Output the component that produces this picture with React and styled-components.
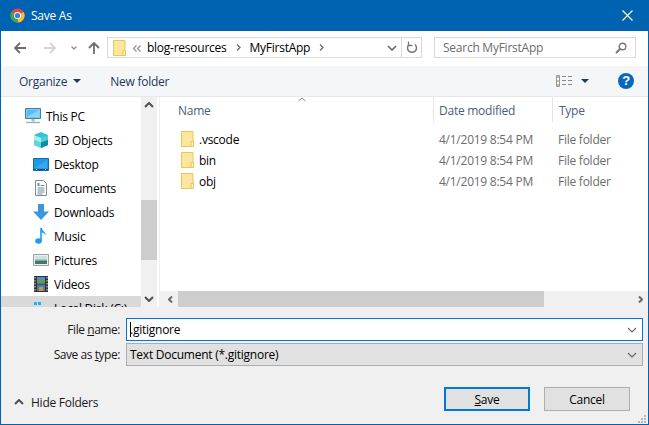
import styled, { createGlobalStyle } from "styled-components";

const GlobalStyle = createGlobalStyle`
  html, body {
    margin: 0;
    padding: 0;
    background: #fff;
  }
  * {
    box-sizing: border-box;
  }
`;

const Dialog = styled.div`
  position: relative;
  width: 649px;
  height: 425px;
  display: flex;
  flex-direction: column;
  overflow: hidden;
  background: #fff;
  border: 1px solid #0063b1;
  border-top: 0;
  font-family: "Open Sans", "Noto Sans", sans-serif;
  font-size: 12px;
  letter-spacing: -0.25px;
  color: #000;
`;

const TitleBar = styled.div`
  height: 31px;
  flex: none;
  margin: 0 -1px;
  padding: 0 16px 0 10px;
  display: flex;
  align-items: center;
  gap: 6px;
  background: #0063b1;
  color: #fff;
`;

const Title = styled.span`
  flex: 1;
`;

const NavBar = styled.div`
  height: 35px;
  flex: none;
  padding: 6px 13px 8px 13px;
  display: flex;
  align-items: center;
`;

const NavIcon = styled.svg`
  flex: none;
  margin-right: ${(p) => p.$gap}px;
`;

const AddressBox = styled.div`
  width: 315px;
  height: 21px;
  flex: none;
  padding-left: 5px;
  display: flex;
  align-items: center;
  border: 1px solid #d9d9d9;
`;

const Crumb = styled.span`
  margin-left: ${(p) => p.$left}px;
  margin-right: ${(p) => p.$right}px;
`;

const AddressEnd = styled.div`
  margin-left: auto;
  display: flex;
  align-items: center;
  height: 100%;
`;

const RefreshCell = styled.div`
  width: 20px;
  height: 100%;
  margin-left: 4px;
  display: flex;
  align-items: center;
  justify-content: center;
  border-left: 1px solid #d9d9d9;
`;

const SearchBox = styled.div`
  width: 202px;
  height: 21px;
  margin-left: 12px;
  flex: none;
  padding: 0 8px;
  display: flex;
  align-items: center;
  justify-content: space-between;
  border: 1px solid #d9d9d9;
  color: #6d6d6d;
`;

const CommandBar = styled.div`
  height: 31px;
  flex: none;
  padding: 0 14px 0 18px;
  display: flex;
  align-items: center;
  background: #f5f6f7;
  border-bottom: 1px solid #e8e8e8;
  color: #1e395b;
`;

const Command = styled.span`
  display: flex;
  align-items: center;
  gap: 6px;
  margin-right: 29px;
`;

const Spacer = styled.div`
  flex: 1;
`;

const ViewsButton = styled.div`
  display: flex;
  align-items: center;
  gap: 9px;
  margin-right: 29px;
`;

const HelpIcon = styled.span`
  width: 16px;
  height: 16px;
  border-radius: 50%;
  background: #0a67bd;
  color: #fff;
  font-family: "Liberation Sans", sans-serif;
  font-weight: bold;
  font-size: 13px;
  line-height: 16px;
  text-align: center;
`;

const Browser = styled.div`
  height: 210px;
  flex: none;
  display: flex;
`;

const Tree = styled.div`
  width: 140px;
  flex: none;
  padding-top: 7px;
  overflow: hidden;
`;

const TreeRow = styled.div`
  height: 24px;
  flex: none;
  padding-left: ${(p) => (p.$root ? 24 : 31)}px;
  display: flex;
  align-items: center;
  gap: 5px;
  background: ${(p) => (p.$selected ? "#d9d9d9" : "transparent")};
  white-space: nowrap;
`;

const TreeIconBox = styled.span`
  width: ${(p) => (p.$root ? 16 : 17)}px;
  height: 16px;
  flex: none;
  display: flex;
  align-items: center;
  justify-content: center;
`;

const VerticalScroll = styled.div`
  width: 16px;
  flex: none;
  display: flex;
  flex-direction: column;
  background: #f0f0f0;
`;

const ScrollArrow = styled.div`
  width: 16px;
  height: 16px;
  flex: none;
  display: flex;
  align-items: center;
  justify-content: center;
`;

const VerticalTrack = styled.div`
  flex: 1;
  padding-top: 87px;
`;

const VerticalThumb = styled.div`
  height: 60px;
  background: #cdcdcd;
`;

const FilePane = styled.div`
  flex: 1;
  min-width: 0;
  margin-left: 2px;
  display: flex;
  flex-direction: column;
  border-left: 1px solid #f0f0f0;
`;

const FileArea = styled.div`
  flex: 1;
  min-height: 0;
`;

const HeaderRow = styled.div`
  position: relative;
  height: 31px;
  display: grid;
  grid-template-columns: 273px 119px 1fr;
  color: #4c607a;
`;

const HeaderCell = styled.div`
  height: 25px;
  padding: 2px 0 0 ${(p) => p.$pad}px;
  display: flex;
  align-items: center;
  border-left: ${(p) => (p.$line ? "1px solid #e5e5e5" : "0")};
`;

const SortMark = styled.svg`
  position: absolute;
  left: 138px;
  top: 0;
`;

const FileRow = styled.div`
  height: 21px;
  display: grid;
  grid-template-columns: 273px 119px 1fr;
  align-items: center;
`;

const NameCell = styled.div`
  padding-left: 21px;
  display: flex;
  align-items: center;
  gap: 5px;
`;

const FileName = styled.span`
  margin-top: 2px;
`;

const MetaCell = styled.div`
  padding: 2px 0 0 6px;
  color: #6d6d6d;
  white-space: nowrap;
`;

const HorizontalScroll = styled.div`
  height: 16px;
  flex: none;
  padding-left: 2px;
  display: flex;
  background: #f0f0f0;
`;

const HorizontalTrack = styled.div`
  flex: 1;
`;

const HorizontalThumb = styled.div`
  width: 366px;
  height: 100%;
  background: #cdcdcd;
`;

const Footer = styled.div`
  flex: 1;
  min-height: 0;
  padding: 11px 5px 0 0;
  display: flex;
  flex-direction: column;
  background: #f0f0f0;
`;

const FieldRow = styled.div`
  height: 23px;
  margin-bottom: 2px;
  display: flex;
  align-items: center;
  gap: 6px;
`;

const FieldLabel = styled.label`
  width: 119px;
  flex: none;
  text-align: right;
  letter-spacing: -0.45px;
  color: #1a1a1a;
`;

const Underlined = styled.span`
  text-decoration: underline;
`;

const FieldBox = styled.div`
  flex: 1;
  height: 23px;
  padding: 0 5px 0 3px;
  display: flex;
  align-items: center;
  justify-content: space-between;
  background: ${(p) => (p.$active ? "#fff" : "#e1e1e1")};
  border: 1px solid ${(p) => (p.$active ? "#0078d7" : "#adadad")};
`;

const CaretText = styled.span`
  display: flex;
  align-items: center;
`;

const Caret = styled.span`
  width: 1px;
  height: 15px;
  margin-right: -1px;
  background: #000;
`;

const ActionRow = styled.div`
  flex: none;
  margin-top: 19px;
  padding: 0 13px;
  display: flex;
  align-items: center;
`;

const HideFolders = styled.span`
  display: flex;
  align-items: center;
  gap: 7px;
  flex: 1;
  padding-top: 6px;
  color: #1a1a1a;
`;

const DialogButton = styled.div`
  width: 86px;
  height: 24px;
  margin-left: 14px;
  display: flex;
  align-items: center;
  justify-content: center;
  background: #e1e1e1;
  border: ${(p) => (p.$primary ? "2px solid #0078d7" : "1px solid #adadad")};
`;

const Grip = styled.svg`
  position: absolute;
  left: 636px;
  top: 414px;
`;

function ChromeLogo() {
  return (
    <svg width="15" height="15" viewBox="0 0 16 16">
      <circle cx="8" cy="8" r="7.500" fill="#e04a3f" />
      <path d="M8 8 L14.500 4.200 A7.500 7.500 0 0 1 8 15.500 Z" fill="#fbc02d" />
      <path d="M8 8 L8 15.500 A7.500 7.500 0 0 1 1.500 4.200 Z" fill="#3ba65a" />
      <circle cx="8" cy="8" r="3.700" fill="#fff" />
      <circle cx="8" cy="8" r="2.800" fill="#3b82dc" />
    </svg>
  );
}

function FolderIcon() {
  return (
    <svg width="13" height="16" viewBox="0 0 13 16">
      <path d="M.5.5h11.500v15H.5z" fill="#fce79c" stroke="#e9c659" />
      <path d="M10 10.500h2.500v5H10z" fill="#fff1c4" stroke="#e9c659" />
    </svg>
  );
}

function Chevron({ up, color = "#505050", width = 2 }) {
  return (
    <svg width="10" height="6" viewBox="0 0 10 6">
      <path d={up ? "M1 5l4-4 4 4" : "M1 1l4 4 4-4"} fill="none" stroke={color} strokeWidth={width} />
    </svg>
  );
}

function SmallCaret({ right, width = 1.300 }) {
  return (
    <svg width="5" height="7" viewBox="0 0 5 7">
      <path d={right ? "M1 .5l3 3-3 3" : "M4 .5l-3 3 3 3"} fill="none" stroke="#6a6a6a" strokeWidth={width} />
    </svg>
  );
}

function DropTriangle({ color = "#1e395b" }) {
  return (
    <svg width="8" height="4" viewBox="0 0 8 4">
      <path d="M0 0h8L4 4z" fill={color} />
    </svg>
  );
}

const treeIcons = {
  pc: (
    <svg width="16" height="16" viewBox="0 0 16 16">
      <path d="M.5.5h15v10H.5z" fill="#7ccdf5" stroke="#4b7c99" />
      <path d="M2 2h12v7H2z" fill="#5cbcf0" />
      <path d="M2 9l12-7v7z" fill="#8ad4f7" />
      <path d="M6.500 11h3v2.500h-3z" fill="#a5c0cf" />
      <path d="M1 14.500h14" stroke="#9bb0bd" strokeWidth="1.400" />
    </svg>
  ),
  cube: (
    <svg width="16" height="16" viewBox="0 0 16 16">
      <path d="M8 0l7 3v10l-7 3-7-3V3z" fill="#2fc4cf" />
      <path d="M1 3l7 3v4.500L1 8z" fill="#a8ecee" />
      <path d="M8 6l7-3v5l-7 2.500z" fill="#4dd0d8" />
      <path d="M1 8l7 2.500V16l-7-3z" fill="#5fd6dc" />
      <path d="M8 10.500L15 8v5l-7 3z" fill="#0f8c9e" />
    </svg>
  ),
  desktop: (
    <svg width="16" height="13" viewBox="0 0 16 13">
      <path d="M.5.5h15v12H.5z" fill="#1c9ae6" stroke="#0c6db4" />
      <path d="M2 10l12-8v8z" fill="#3aa9ec" />
      <path d="M1 11.500h14" stroke="#0c4f86" />
      <path d="M3 11.500h1M12 11.500h1" stroke="#dff1fc" />
    </svg>
  ),
  docs: (
    <svg width="12" height="16" viewBox="0 0 12 16">
      <path d="M.5.5h8l3 3v12H.5z" fill="#fff" stroke="#8a8a8a" />
      <path d="M2.500 3h2v3h-2z" fill="#5b8fc4" />
      <path d="M5.500 5.500h4M2.500 8h7M2.500 10h7M2.500 12h7M2.500 14h5" stroke="#6d8cab" />
    </svg>
  ),
  down: (
    <svg width="16" height="16" viewBox="0 0 16 16">
      <path d="M5 0h6v7.500h5L8 16 0 7.500h5z" fill="#3d94e0" />
    </svg>
  ),
  music: (
    <svg width="11" height="16" viewBox="0 0 11 16">
      <ellipse cx="3.500" cy="13" rx="3.300" ry="2.800" fill="#1e9bf0" />
      <path d="M5.200 13V0h1.600c.3 3 4.200 3.500 3.800 7.500-.7-2-2.700-3-3.800-3V13z" fill="#1e9bf0" />
    </svg>
  ),
  pictures: (
    <svg width="16" height="12" viewBox="0 0 16 12">
      <path d="M.5.5h15v11H.5z" fill="#e8f1f5" stroke="#a0a0a0" />
      <path d="M2 2h12v3.500H2z" fill="#cfe0ea" />
      <path d="M2 5.500h12V7H2z" fill="#7fa89a" />
      <path d="M2 7h12v3H2z" fill="#41786a" />
    </svg>
  ),
  videos: (
    <svg width="14" height="16" viewBox="0 0 14 16">
      <path d="M0 0h14v16H0z" fill="#333" />
      <path d="M3 1h8v6.500H3z" fill="#4a8ccf" />
      <path d="M3 4h8v3.500H3z" fill="#6b9b4a" />
      <path d="M3 8.500h8V15H3z" fill="#3f7fc0" />
      <path d="M5 11h4v4H5z" fill="#d9922f" />
      <path d="M1 1v14M13 1v14" stroke="#ddd" strokeDasharray="1.500 1.500" />
    </svg>
  ),
  disk: (
    <svg width="14" height="16" viewBox="0 0 14 16">
      <path d="M0 2h3v3H0zM4 2h3v3H4z" fill="#19b5ee" />
    </svg>
  ),
};

const treeItems = [
  { label: "This PC", icon: "pc", root: true },
  { label: "3D Objects", icon: "cube" },
  { label: "Desktop", icon: "desktop" },
  { label: "Documents", icon: "docs" },
  { label: "Downloads", icon: "down" },
  { label: "Music", icon: "music" },
  { label: "Pictures", icon: "pictures" },
  { label: "Videos", icon: "videos" },
  { label: "Local Disk (C:)", icon: "disk", selected: true },
];

const files = [".vscode", "bin", "obj"];

export default function App() {
  return (
    <>
      <GlobalStyle />
      <Dialog>
        <TitleBar>
          <ChromeLogo />
          <Title>Save As</Title>
          <svg width="11" height="11" viewBox="0 0 11 11">
            <path d="M.5.5l10 10M10.500.5l-10 10" stroke="#fff" strokeWidth="1.100" />
          </svg>
        </TitleBar>

        <NavBar>
          <NavIcon $gap={18} width="12" height="12" viewBox="0 0 12 12">
            <path d="M6 1L1 6l5 5M1 6h11" fill="none" stroke="#6e6e6e" strokeWidth="1.800" />
          </NavIcon>
          <NavIcon $gap={15} width="12" height="12" viewBox="0 0 12 12">
            <path d="M6 1l5 5-5 5M11 6H0" fill="none" stroke="#d4d4d4" strokeWidth="1.800" />
          </NavIcon>
          <NavIcon $gap={11} width="6" height="4" viewBox="0 0 6 4">
            <path d="M.5.5L3 3 5.500.5" fill="none" stroke="#8f8f8f" strokeWidth="1.300" />
          </NavIcon>
          <NavIcon $gap={7} width="12" height="12" viewBox="0 0 12 12">
            <path d="M1 6l5-5 5 5M6 1v11" fill="none" stroke="#6e6e6e" strokeWidth="1.800" />
          </NavIcon>
          <AddressBox>
            <FolderIcon />
            <Crumb $left={7} $right={6}>
              <svg width="8" height="7" viewBox="0 0 8 7">
                <path d="M3.500.5l-3 3 3 3M7.500.5l-3 3 3 3" fill="none" stroke="#888" strokeWidth="1.100" />
              </svg>
            </Crumb>
            <Crumb $left={0} $right={9}>blog-resources</Crumb>
            <SmallCaret right />
            <Crumb $left={9} $right={9}>MyFirstApp</Crumb>
            <SmallCaret right />
            <AddressEnd>
              <Chevron color="#6a6a6a" width={1.600} />
              <RefreshCell>
                <svg width="12" height="13" viewBox="0 0 12 13">
                  <path d="M3 3.500a4.500 4.500 0 1 0 6 0" fill="none" stroke="#777" strokeWidth="1.500" />
                  <path d="M2.500 .5v4h4" fill="none" stroke="#777" strokeWidth="1.300" />
                </svg>
              </RefreshCell>
            </AddressEnd>
          </AddressBox>
          <SearchBox>
            Search MyFirstApp
            <svg width="12" height="12" viewBox="0 0 12 12">
              <circle cx="7.500" cy="4.500" r="3.300" fill="none" stroke="#777" strokeWidth="1.400" />
              <path d="M5 7l-4 4" stroke="#777" strokeWidth="2" />
            </svg>
          </SearchBox>
        </NavBar>

        <CommandBar>
          <Command>
            Organize
            <DropTriangle />
          </Command>
          <Command>New folder</Command>
          <Spacer />
          <ViewsButton>
            <svg width="16" height="12" viewBox="0 0 16 12">
              <path d="M.5.500h3v11h-3z" fill="#fff" stroke="#9a9a9a" />
              <path d="M1 2h2" stroke="#4a7ebb" />
              <path d="M1 6h2" stroke="#7a9a4a" />
              <path d="M1 10h2" stroke="#c0504d" />
              <path d="M6 1.500h4M12 1.500h4M6 5.500h4M12 5.500h4M6 9.500h4M12 9.500h4" stroke="#8a8a8a" />
            </svg>
            <DropTriangle />
          </ViewsButton>
          <HelpIcon>?</HelpIcon>
        </CommandBar>

        <Browser>
          <Tree>
            {treeItems.map((item) => (
              <TreeRow key={item.label} $root={item.root} $selected={item.selected}>
                <TreeIconBox $root={item.root}>{treeIcons[item.icon]}</TreeIconBox>
                {item.label}
              </TreeRow>
            ))}
          </Tree>
          <VerticalScroll>
            <ScrollArrow>
              <Chevron up />
            </ScrollArrow>
            <VerticalTrack>
              <VerticalThumb />
            </VerticalTrack>
            <ScrollArrow>
              <Chevron />
            </ScrollArrow>
          </VerticalScroll>
          <FilePane>
            <FileArea>
              <HeaderRow>
                <HeaderCell $pad={18}>Name</HeaderCell>
                <HeaderCell $pad={5} $line>Date modified</HeaderCell>
                <HeaderCell $pad={6} $line>Type</HeaderCell>
                <SortMark width="8" height="5" viewBox="0 0 8 5">
                  <path d="M.5 4L4 1l3.500 3" fill="none" stroke="#8a8a8a" />
                </SortMark>
              </HeaderRow>
              {files.map((name) => (
                <FileRow key={name}>
                  <NameCell>
                    <FolderIcon />
                    <FileName>{name}</FileName>
                  </NameCell>
                  <MetaCell>4/1/2019 8:54 PM</MetaCell>
                  <MetaCell>File folder</MetaCell>
                </FileRow>
              ))}
            </FileArea>
            <HorizontalScroll>
              <ScrollArrow>
                <SmallCaret width={2} />
              </ScrollArrow>
              <HorizontalThumb />
              <HorizontalTrack />
              <ScrollArrow>
                <SmallCaret right width={2} />
              </ScrollArrow>
            </HorizontalScroll>
          </FilePane>
        </Browser>

        <Footer>
          <FieldRow>
            <FieldLabel>
              File <Underlined>n</Underlined>ame:
            </FieldLabel>
            <FieldBox $active>
              <CaretText>
                <Caret />
                .gitignore
              </CaretText>
              <Chevron color="#666" width={1.100} />
            </FieldBox>
          </FieldRow>
          <FieldRow>
            <FieldLabel>
              Save as <Underlined>t</Underlined>ype:
            </FieldLabel>
            <FieldBox>
              Text Document (*.gitignore)
              <Chevron color="#666" width={1.100} />
            </FieldBox>
          </FieldRow>
          <ActionRow>
            <HideFolders>
              <Chevron up />
              Hide Folders
            </HideFolders>
            <DialogButton $primary>
              <span>
                <Underlined>S</Underlined>ave
              </span>
            </DialogButton>
            <DialogButton>Cancel</DialogButton>
          </ActionRow>
        </Footer>
        <Grip width="10" height="10" viewBox="0 0 10 10">
          <path d="M7 1h2v2H7zM4 4h2v2H4zM7 4h2v2H7zM1 7h2v2H1zM4 7h2v2H4zM7 7h2v2H7z" fill="#b8b8b8" />
        </Grip>
      </Dialog>
    </>
  );
}
